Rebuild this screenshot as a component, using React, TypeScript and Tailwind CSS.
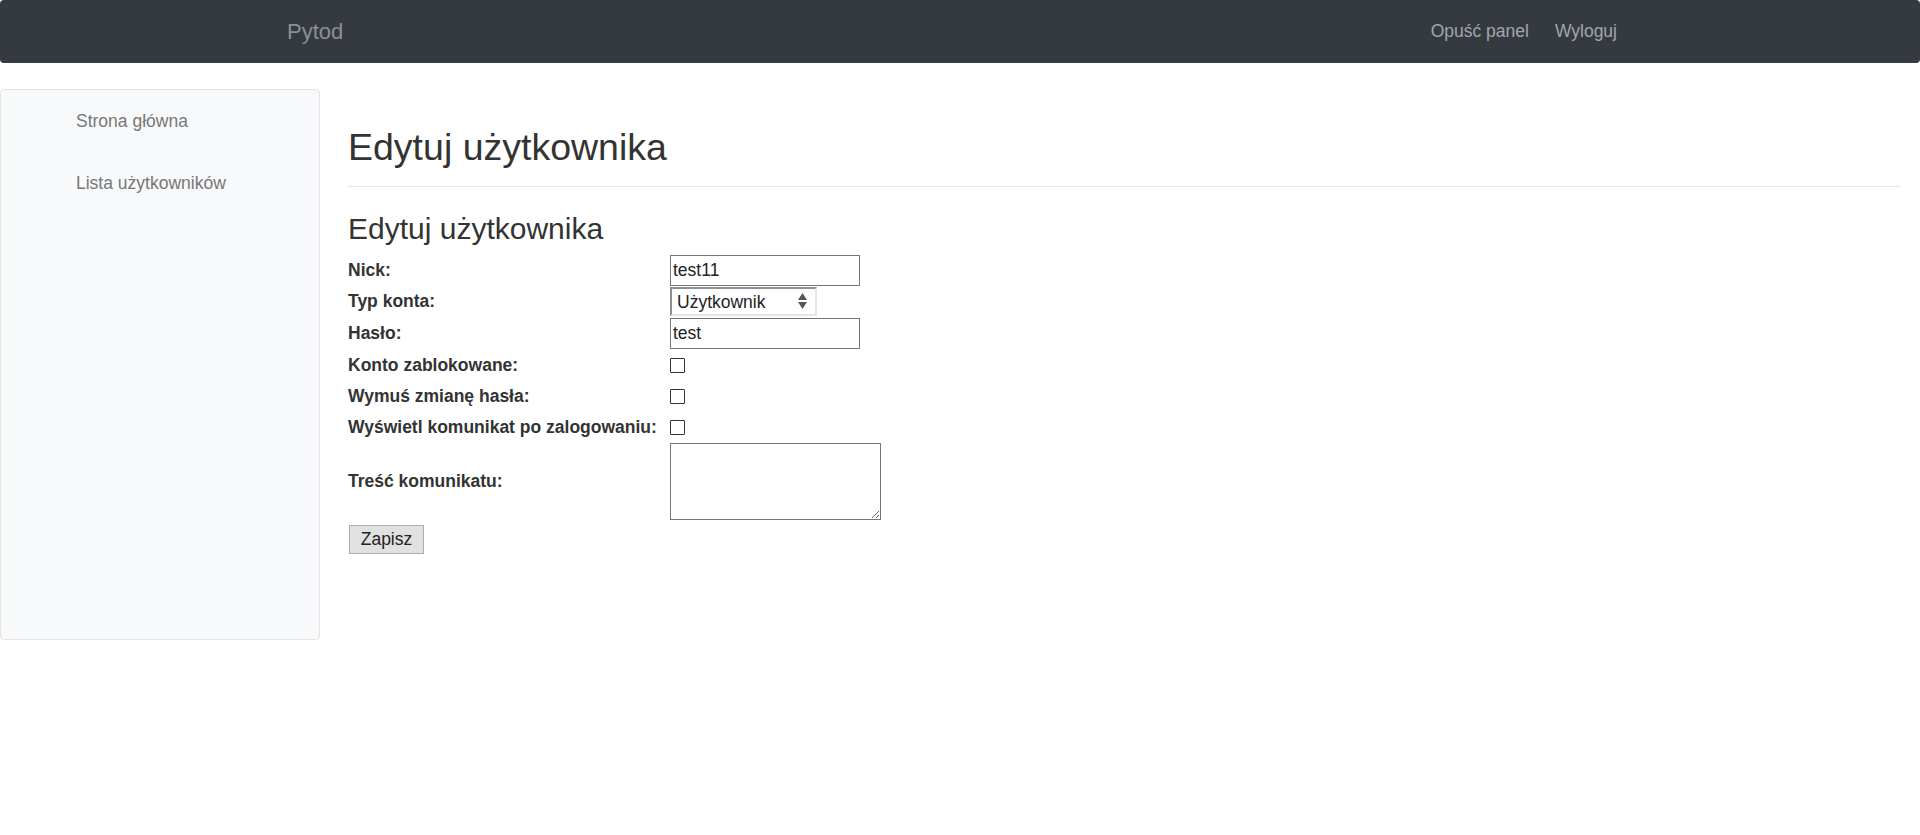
import React from 'react';

const sideLinks = ['Strona główna', 'Lista użytkowników'];

function SelectArrows() {
  return (
    <svg width="11" height="18" viewBox="0 0 11 18" className="pointer-events-none absolute right-[9px] top-[5px]">
      <path d="M5.5 1 L10 8 L1 8 Z" fill="#555" />
      <path d="M1 10 L10 10 L5.5 17 Z" fill="#555" />
    </svg>
  );
}

function FormRow({ label, children, className = '' }: { label: string; children: React.ReactNode; className?: string }) {
  return (
    <div className={`flex items-center ${className}`}>
      <label className="w-[322px] font-bold text-[#333]">{label}</label>
      {children}
    </div>
  );
}

function Check() {
  return (
    <input
      type="checkbox"
      className="block h-[15px] w-[15px] shrink-0 appearance-none rounded-[1px] border border-[#333] bg-white"
    />
  );
}

export default function App() {
  return (
    <div className="min-h-[835px] bg-white font-['Liberation_Sans',Arial,sans-serif] text-[17.5px] text-[#333]">
      {/* Top navbar */}
      <nav className="flex h-[63px] items-center rounded-[4px] bg-[#343a40] pl-[287px] pr-[303px]">
        <span className="text-[22px] text-[#8c8f93]">Pytod</span>
        <div className="ml-auto flex gap-[26px] text-[#a3a6a9]">
          <a href="#">Opuść panel</a>
          <a href="#">Wyloguj</a>
        </div>
      </nav>

      <div className="mt-[26px] flex gap-[28px] pr-[20px]">
        {/* Sidebar */}
        <aside className="h-[551px] w-[320px] shrink-0 rounded-[4px] border border-[#e3e3e3] bg-[#f8f9fa]">
          {sideLinks.map((l) => (
            <a key={l} href="#" className="block py-[18px] pl-[75px] leading-[26px] text-[#777]">
              {l}
            </a>
          ))}
        </aside>

        {/* Main content */}
        <main className="flex-1 pt-[36px]">
          <div className="border-b border-[#e5e5e5] pb-[17px]">
            <h1 className="text-[37.5px] leading-[44px] text-[#333]">Edytuj użytkownika</h1>
          </div>

          <h2 className="mt-[24px] mb-[8px] text-[30px] leading-[36px] text-[#333]">Edytuj użytkownika</h2>

          <form className="flex flex-col">
            <FormRow label="Nick:" className="h-[31px]">
              <input
                defaultValue="test11"
                className="h-[31px] w-[190px] border border-[#767676] px-[2px] text-[#222] outline-none"
              />
            </FormRow>

            <FormRow label="Typ konta:" className="mt-[1px] h-[29px]">
              <div className="relative">
                <select
                  defaultValue="user"
                  className="h-[29px] w-[147px] appearance-none border-2 border-t-[#8f8f8f] border-l-[#8f8f8f] border-b-[#e6e6e6] border-r-[#e6e6e6] bg-white pl-[5px] text-[#222] outline-none"
                >
                  <option value="user">Użytkownik</option>
                  <option value="admin">Administrator</option>
                </select>
                <SelectArrows />
              </div>
            </FormRow>

            <FormRow label="Hasło:" className="mt-[2px] h-[31px]">
              <input
                defaultValue="test"
                className="h-[31px] w-[190px] border border-[#767676] px-[2px] text-[#222] outline-none"
              />
            </FormRow>

            <FormRow label="Konto zablokowane:" className="mt-[1px] h-[31px]">
              <Check />
            </FormRow>

            <FormRow label="Wymuś zmianę hasła:" className="h-[31px]">
              <Check />
            </FormRow>

            <FormRow label="Wyświetl komunikat po zalogowaniu:" className="h-[31px]">
              <Check />
            </FormRow>

            <FormRow label="Treść komunikatu:" className="h-[77px]">
              <textarea className="h-[77px] w-[211px] border border-[#767676] p-[2px] outline-none" />
            </FormRow>

            <div className="mt-[5px] pl-[1px]">
              <button
                type="button"
                className="h-[29px] w-[75px] border border-[#adadad] bg-[#e1e1e1] text-[#222]"
              >
                Zapisz
              </button>
            </div>
          </form>
        </main>
      </div>
    </div>
  );
}
